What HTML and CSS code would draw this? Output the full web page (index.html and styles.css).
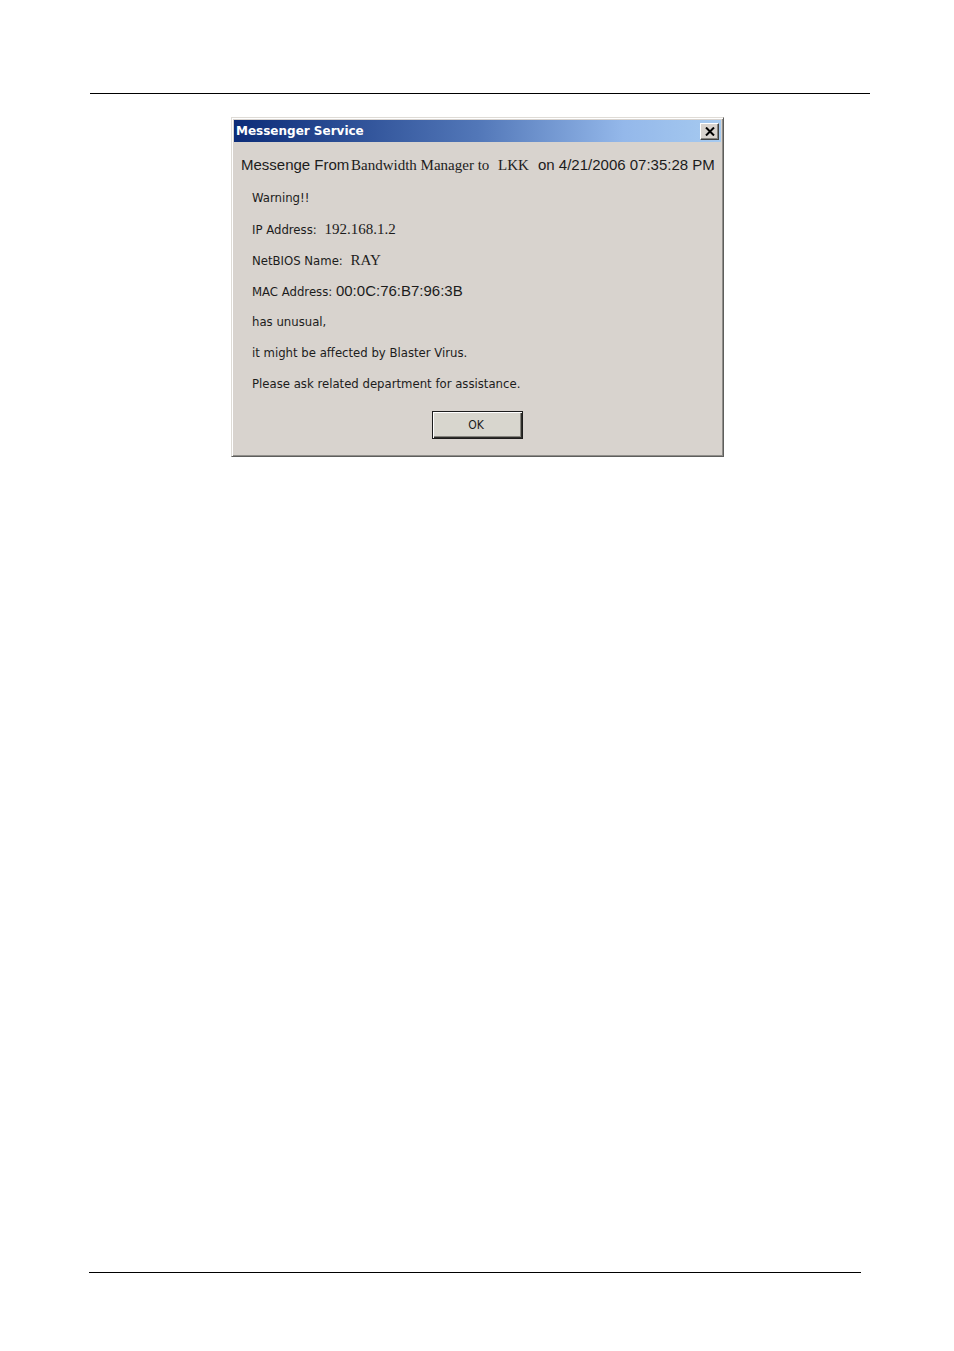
FILE: index.html
```
<!DOCTYPE html>
<html lang="en">

<head>
    <meta charset="UTF-8">
    <meta name="viewport" content="width=device-width, initial-scale=1.0">
    <title>Messenger Service</title>
    <link rel="stylesheet" href="styles.css">
</head>

<body>
    <div class="page">
        <hr class="rule rule-top">

        <!-- Messenger dialog -->
        <main class="dialog">
            <div class="title-bar">
                <h1>Messenger Service</h1>
                <button class="close-button" type="button" aria-label="Close">
                    <svg viewBox="0 0 10 9" width="10" height="9">
                        <path d="M1 0.5L9 8.5M9 0.5L1 8.5" fill="none" stroke="#000" stroke-width="2"/>
                    </svg>
                </button>
            </div>

            <div class="dialog-body">
                <p class="message-from">
                    <span>Messenge From</span>
                    <span class="serif">Bandwidth Manager to</span>
                    <span class="serif">LKK</span>
                    <span>on 4/21/2006 07:35:28 PM</span>
                </p>

                <div class="message">
                    <p>Warning!!</p>
                    <p>IP Address: <span class="serif value">192.168.1.2</span></p>
                    <p>NetBIOS Name: <span class="serif value">RAY</span></p>
                    <p>MAC Address: <span class="sans">00:0C:76:B7:96:3B</span></p>
                    <p>has unusual,</p>
                    <p>it might be affected by Blaster Virus.</p>
                    <p>Please ask related department for assistance.</p>
                </div>

                <button class="ok-button" type="button">OK</button>
            </div>
        </main>

        <hr class="rule rule-bottom">
    </div>
</body>

</html>
```

FILE: styles.css
```
* {
    box-sizing: border-box;
}

body {
    margin: 0;
    background-color: #fff;
    color: #1c1c1c;
    font-family: "DejaVu Sans Condensed", "DejaVu Sans", sans-serif;
    font-size: 13px;
}

p {
    margin: 0;
}

.page {
    display: flex;
    flex-direction: column;
    align-items: center;
    min-height: 100vh;
    padding: 93px 84px 78px 85px;
}

/* Header and footer rules */
.rule {
    align-self: stretch;
    height: 1px;
    border: 0;
    background-color: #000;
}

.rule-top {
    margin: 0 0 23px 5px;
}

.rule-bottom {
    margin: auto 9px 0 4px;
}

/* Dialog window */
.dialog {
    width: 100%;
    max-width: 493px;
    padding: 2px;
    background-color: #d8d3ce;
    border: 1px solid #dedbd6;
    border-right: 1px solid #5e5e5c;
    border-bottom: 1px solid #5e5e5c;
    box-shadow: inset 1px 1px #fff, inset -1px -1px #908e8a;
}

.title-bar {
    display: flex;
    justify-content: space-between;
    align-items: center;
    height: 22px;
    padding: 0 2px;
    background: linear-gradient(to right, #0c2c78, #5277b8 50%, #94b8ea 80%, #a6caf0);
}

.title-bar h1 {
    margin: 0;
    color: #fff;
    font-family: "DejaVu Sans", sans-serif;
    font-size: 12px;
    font-weight: bold;
    line-height: 22px;
}

.close-button {
    display: flex;
    justify-content: center;
    align-items: center;
    width: 19px;
    height: 17px;
    padding: 0;
    background-color: #d8d3ce;
    border: 1px solid #fff;
    border-right-color: #404040;
    border-bottom-color: #404040;
    box-shadow: inset -1px -1px #86847f;
}

/* Message text */
.dialog-body {
    padding: 6px 7px 15px;
}

.message-from {
    display: grid;
    grid-template-columns: 110px 147px 40px 1fr;
    line-height: 34px;
    white-space: nowrap;
}

.message-from,
.sans {
    font-family: "Liberation Sans", Arial, sans-serif;
    font-size: 15px;
}

.serif {
    font-family: "Liberation Serif", "Times New Roman", serif;
    font-size: 15px;
}

.value {
    margin-left: 4px;
}

.message {
    padding-left: 11px;
}

.message p {
    height: 31px;
    line-height: 32px;
}

.ok-button {
    display: block;
    width: 91px;
    height: 28px;
    margin: 12px auto 0;
    padding: 0 3px 0 0;
    background-color: #d8d6ce;
    border: 1px solid #1c1c1c;
    box-shadow: inset 1px 1px #fff, inset -1px -1px #2e2e2a, inset -2px -2px #86847f;
    color: #1c1c1c;
    font-family: inherit;
    font-size: 12px;
}
```
